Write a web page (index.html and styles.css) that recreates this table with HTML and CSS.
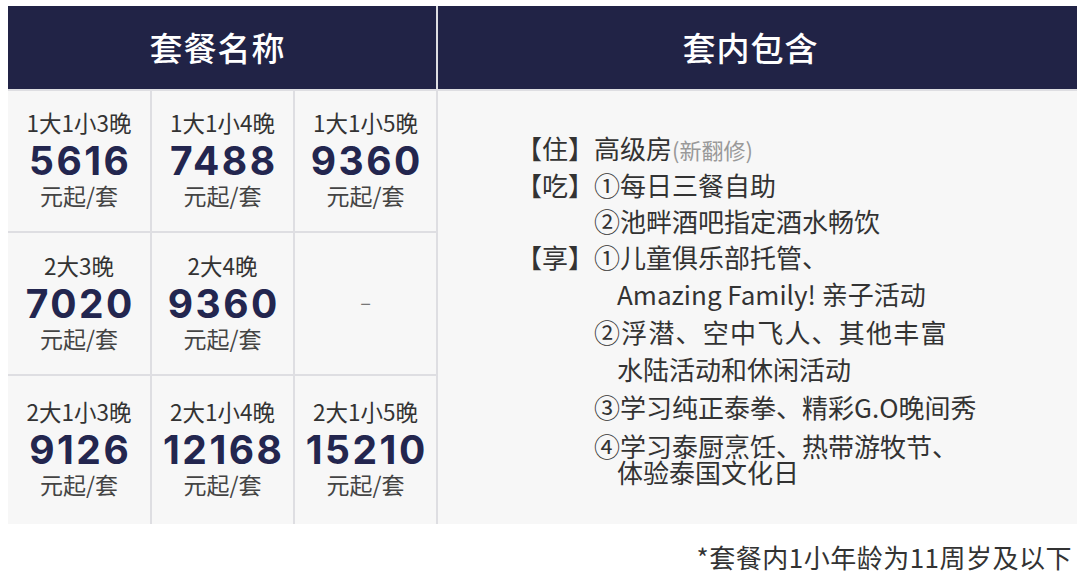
FILE: index.html
```html
<!DOCTYPE html>
<html lang="zh-CN">
<head>
<meta charset="utf-8">
<title>套餐</title>
<link rel="stylesheet" href="styles.css">
</head>
<body>
<div class="table">
  <div class="th th-name">套餐名称</div>
  <div class="th th-incl">套内包含</div>

  <div class="cell"><div class="lbl">1大1小3晚</div><div class="price">5616</div><div class="unit">元起/套</div></div>
  <div class="cell"><div class="lbl">1大1小4晚</div><div class="price">7488</div><div class="unit">元起/套</div></div>
  <div class="cell"><div class="lbl">1大1小5晚</div><div class="price">9360</div><div class="unit">元起/套</div></div>

  <div class="incl">
    <div class="row"><span class="tag">【住】</span><div class="body"><div class="ln">高级房<span class="sub">(新翻修)</span></div></div></div>
    <div class="row"><span class="tag">【吃】</span><div class="body">
      <div class="ln">①每日三餐自助</div>
      <div class="ln">②池畔酒吧指定酒水畅饮</div>
    </div></div>
    <div class="row"><span class="tag">【享】</span><div class="body enjoy">
      <div class="ln">①儿童俱乐部托管、</div>
      <div class="ln ind">Amazing Family! 亲子活动</div>
      <div class="ln wide">②浮潜、空中飞人、其他丰富</div>
      <div class="ln ind">水陆活动和休闲活动</div>
      <div class="ln">③学习纯正泰拳、精彩G.O晚间秀</div>
      <div class="tight">
        <div class="ln">④学习泰厨烹饪、热带游牧节、</div>
        <div class="ln ind">体验泰国文化日</div>
      </div>
    </div></div>
  </div>

  <div class="cell"><div class="lbl">2大3晚</div><div class="price">7020</div><div class="unit">元起/套</div></div>
  <div class="cell"><div class="lbl">2大4晚</div><div class="price">9360</div><div class="unit">元起/套</div></div>
  <div class="cell"><div class="dash">–</div></div>

  <div class="cell"><div class="lbl">2大1小3晚</div><div class="price">9126</div><div class="unit">元起/套</div></div>
  <div class="cell"><div class="lbl">2大1小4晚</div><div class="price">12168</div><div class="unit">元起/套</div></div>
  <div class="cell"><div class="lbl">2大1小5晚</div><div class="price">15210</div><div class="unit">元起/套</div></div>
</div>
<p class="note">*套餐内1小年龄为11周岁及以下</p>
</body>
</html>
```
FILE: styles.css
```css
* { box-sizing: border-box; }
body {
  margin: 0;
  padding: 6px 3px 0 8px;
  background: #ffffff;
  font-family: "Noto Sans CJK SC", "Noto Sans", sans-serif;
  color: #333333;
}
.table {
  display: grid;
  grid-template-columns: 142px 141px 141px 639px;
  grid-template-rows: 83px 140px 141px 148px;
  gap: 2px;
  background: #dedee2;
}
.th {
  background: #212346;
  color: #ffffff;
  font-size: 33px;
  font-weight: 500;
  display: flex;
  align-items: center;
  justify-content: center;
  letter-spacing: 1px;
  padding-bottom: 2px;
}
.th-name { grid-column: 1 / span 3; padding-right: 9px; }
.th-incl { grid-column: 4; padding-right: 14px; }
.cell {
  background: #f7f7f7;
  display: flex;
  flex-direction: column;
  align-items: center;
  justify-content: center;
}
.lbl {
  font-size: 22.5px;
  line-height: 30px;
  color: #333333;
  margin-top: -3px;
}
.price {
  font-family: Inter, "Liberation Sans", sans-serif;
  font-weight: 700;
  font-size: 39px;
  line-height: 42px;
  color: #23264f;
  letter-spacing: 2.5px;
  margin-right: -2.5px;
  margin-top: 3px;
  margin-bottom: -2px;
}
.unit {
  font-size: 23px;
  line-height: 30px;
  color: #444444;
  margin-bottom: 2px;
}
.dash {
  font-size: 20px;
  color: #777777;
  margin-bottom: 4px;
}
.incl {
  grid-column: 4;
  grid-row: 2 / span 3;
  background: #f7f7f7;
  padding: 39px 0 0 78px;
  font-size: 26px;
  color: #333333;
}
.row {
  display: flex;
  align-items: flex-start;
}
.tag {
  width: 78px;
  flex: none;
  line-height: 36px;
}
.ln {
  line-height: 36px;
  white-space: nowrap;
}
.enjoy > .ln:not(:first-child) { line-height: 37.5px; }
.ln.ind { padding-left: 23px; }
.ln.wide { letter-spacing: 1.2px; }
.sub {
  font-size: 22px;
  color: #999999;
}
.tight { margin-top: 7.5px; }
.tight .ln { line-height: 26px; }
.note {
  margin: 18px 0 0 0;
  padding-right: 5px;
  text-align: right;
  font-size: 26px;
  letter-spacing: 0.5px;
  line-height: 30px;
  color: #333333;
}
```
